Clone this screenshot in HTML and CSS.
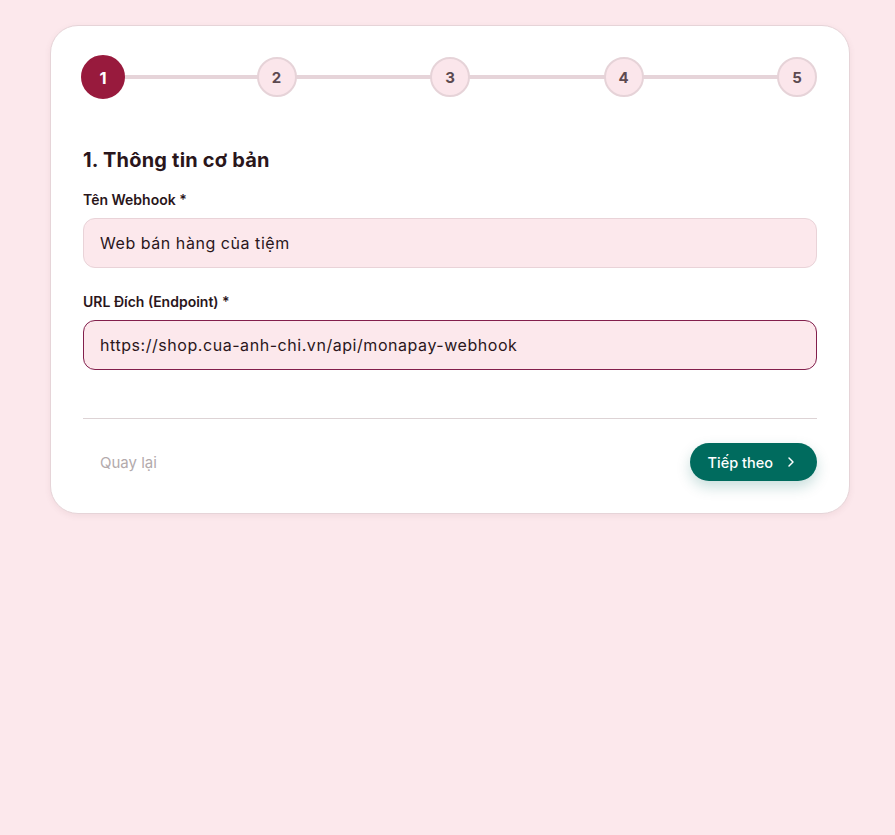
FILE: index.html
```html
<!DOCTYPE html>
<html lang="vi">
<head>
    <meta charset="UTF-8">
    <meta name="viewport" content="width=device-width, initial-scale=1.0">
    <title>Tạo Webhook</title>
    <link rel="stylesheet" href="styles.css">
</head>
<body>
    <div class="card">
        <div class="stepper">
            <div class="step-line"></div>
            <div class="step active">1</div>
            <div class="step">2</div>
            <div class="step">3</div>
            <div class="step">4</div>
            <div class="step">5</div>
        </div>

        <h2 class="section-title">1. Thông tin cơ bản</h2>

        <div class="field">
            <label for="name">Tên Webhook *</label>
            <input type="text" id="name" class="input" value="Web bán hàng của tiệm">
        </div>

        <div class="field">
            <label for="url">URL Đích (Endpoint) *</label>
            <input type="text" id="url" class="input focused" value="https://shop.cua-anh-chi.vn/api/monapay-webhook">
        </div>

        <div class="actions">
            <button class="btn-back">Quay lại</button>
            <button class="btn-next">
                Tiếp theo
                <svg width="16" height="16" viewBox="0 0 24 24" fill="none" stroke="currentColor" stroke-width="2.2" stroke-linecap="round" stroke-linejoin="round"><path d="M9 6l6 6-6 6"/></svg>
            </button>
        </div>
    </div>
</body>
</html>
```

FILE: styles.css
```css
* {
    margin: 0;
    padding: 0;
    box-sizing: border-box;
}

body {
    font-family: 'Inter', 'Noto Sans', sans-serif;
    color: #2a161b;
    background-color: #fce8ec;
    padding: 25px 45px 25px 50px;
}

.card {
    background-color: #fff;
    border: 1px solid #e6d4d8;
    border-radius: 28px;
    padding: 31px 32px 32px;
    box-shadow: 0 2px 6px rgba(120, 60, 75, 0.08);
}

.stepper {
    position: relative;
    display: flex;
    justify-content: space-between;
    align-items: center;
    margin-bottom: 49px;
}

.step-line {
    position: absolute;
    left: 20px;
    right: 20px;
    top: 50%;
    height: 4px;
    margin-top: -2px;
    background-color: #e6d4d9;
}

.step {
    position: relative;
    width: 40px;
    height: 40px;
    border-radius: 50%;
    background-color: #fbe6eb;
    border: 2px solid #e6d3d8;
    color: #5d4a50;
    font-size: 15px;
    font-weight: 700;
    display: flex;
    align-items: center;
    justify-content: center;
}

.step.active {
    background-color: #981a3d;
    border-color: #981a3d;
    color: #fff;
    transform: scale(1.1);
}

.section-title {
    font-size: 20px;
    line-height: 28px;
    font-weight: 700;
    letter-spacing: 0.2px;
    margin-bottom: 16px;
}

.field {
    margin-bottom: 24px;
}

.field label {
    display: block;
    font-size: 14px;
    line-height: 20px;
    font-weight: 600;
    margin-bottom: 8px;
}

.input {
    display: block;
    width: 100%;
    height: 50px;
    padding: 0 16px;
    font-family: inherit;
    font-size: 16px;
    letter-spacing: 0.55px;
    color: #2a161b;
    background-color: #fce8ec;
    border: 1px solid #e9d3d8;
    border-radius: 12px;
    outline: none;
}

.input.focused {
    border-color: #821f4c;
}

.actions {
    margin-top: 48px;
    padding-top: 24px;
    border-top: 1px solid #ddd3d5;
    display: flex;
    justify-content: space-between;
    align-items: center;
}

.btn-back {
    background: none;
    border: none;
    font-family: inherit;
    font-size: 15px;
    color: #b3aaac;
    padding: 9px 17px;
    cursor: pointer;
}

.btn-next {
    display: flex;
    align-items: center;
    gap: 10px;
    height: 38px;
    padding: 0 18px;
    background-color: #006b5e;
    color: #fff;
    border: none;
    border-radius: 19px;
    font-family: inherit;
    font-size: 14.5px;
    font-weight: 500;
    box-shadow: 0 6px 14px rgba(0, 107, 94, 0.22);
    cursor: pointer;
}
```
